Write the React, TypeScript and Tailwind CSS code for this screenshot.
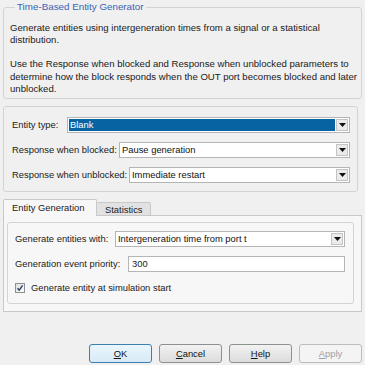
import clsx from "clsx";

const font = { fontFamily: '"Liberation Sans", Arial, sans-serif' };

function Arrow() {
  return (
    <div className="m-[1px] flex w-[12px] items-center justify-center border border-[#c4c4c4] bg-[#ebebeb]">
      <svg width="7" height="4" viewBox="0 0 7 4">
        <path d="M0 0h7L3.5 4z" fill="#111" />
      </svg>
    </div>
  );
}

function Combo({ value, selected, className }: { value: string; selected?: boolean; className?: string }) {
  return (
    <div className={clsx("flex h-[16px] border border-[#b5b5b5] bg-white", className)}>
      <div
        className={clsx(
          "my-[1px] ml-[1px] flex-1 pl-[1px] leading-[12px] whitespace-nowrap",
          selected ? "bg-[#0863a3] text-white" : "text-[#111]"
        )}
      >
        {value}
      </div>
      <Arrow />
    </div>
  );
}

function Button({ label, mn, focused, disabled }: { label: string; mn: string; focused?: boolean; disabled?: boolean }) {
  return (
    <button
      className={clsx(
        "h-[19px] w-[63px] rounded-[3px] border text-center leading-[17px]",
        focused
          ? "border-[#3c7fb1] bg-gradient-to-b from-[#eaf6fd] to-[#d7eaf7] text-[#111]"
          : disabled
          ? "border-[#bcbcbc] bg-[#f4f4f4] text-[#a0a0a0]"
          : "border-[#8e8f8f] bg-gradient-to-b from-[#f2f2f2] to-[#dcdcdc] text-[#111]"
      )}
    >
      <span className="underline">{mn}</span>
      {label}
    </button>
  );
}

export default function App() {
  return (
    <div
      className="flex h-[365px] w-[365px] flex-col overflow-hidden bg-[#f0f0f0] px-[3px] pt-[1px] text-[9.4px] text-[#1a1a1a]"
      style={font}
    >
      {/* description group */}
      <fieldset className="mr-[1px] rounded-[3px] border border-[#d3d3d3] pr-[4px] pb-[3px] pl-[6px]">
        <legend className="ml-[5px] px-[2px] text-[9.8px] leading-[12px] text-[#3a63b0]">Time-Based Entity Generator</legend>
        <div className="pt-[9px] text-[9.6px] leading-[12.2px] whitespace-nowrap">
          <p>
            Generate entities using intergeneration times from a signal or a statistical
            <br />
            distribution.
          </p>
          <p className="mt-[12px]">
            Use the Response when blocked and Response when unblocked parameters to
            <br />
            determine how the block responds when the OUT port becomes blocked and later
            <br />
            unblocked.
          </p>
        </div>
      </fieldset>

      {/* parameters */}
      <div className="mt-[7px] mr-[4px] flex flex-col gap-[9px] rounded-[3px] border border-[#d3d3d3] pt-[10px] pr-[7px] pb-[8px] pl-[8px]">
        <div className="flex items-center">
          <span className="w-[55px]">Entity type:</span>
          <Combo value="Blank" selected className="flex-1" />
        </div>
        <div className="flex items-center">
          <span className="w-[107px]">Response when blocked:</span>
          <Combo value="Pause generation" className="flex-1" />
        </div>
        <div className="flex items-center">
          <span className="w-[117px]">Response when unblocked:</span>
          <Combo value="Immediate restart" className="flex-1" />
        </div>
      </div>

      {/* tabs */}
      <div className="mt-[7px] flex items-end">
        <div className="relative z-10 -mb-[1px] h-[17px] w-[94px] rounded-t-[2px] border border-b-0 border-[#c8c8c8] bg-[#f7f7f7] pl-[8px] leading-[16px]">
          Entity Generation
        </div>
        <div className="h-[13px] w-[54px] rounded-t-[2px] border border-b-0 border-l-0 border-[#c8c8c8] bg-[#e2e2e2] pl-[8px] leading-[13px]">
          Statistics
        </div>
      </div>
      <div className="h-[97px] border border-[#c8c8c8] bg-[#f7f7f7] pt-[6px] pr-[7px] pl-[3px]">
        <div className="flex flex-col rounded-[3px] border border-[#d3d3d3] pt-[8px] pr-[8px] pb-[8px] pl-[7px]">
          <div className="flex items-center">
            <span className="w-[100px]">Generate entities with:</span>
            <Combo value="Intergeneration time from port t" className="flex-1" />
          </div>
          <div className="mt-[9px] flex items-center">
            <span className="w-[113px]">Generation event priority:</span>
            <div className="h-[16px] flex-1 border border-[#b5b5b5] bg-white pl-[3px] leading-[14px]">300</div>
          </div>
          <div className="mt-[9px] flex items-center gap-[6px]">
            <svg width="10" height="10" viewBox="0 0 10 10">
              <defs>
                <linearGradient id="cb" x1="0" y1="0" x2="1" y2="1">
                  <stop offset="0" stopColor="#dcdcdc" />
                  <stop offset="1" stopColor="#ffffff" />
                </linearGradient>
              </defs>
              <rect x="0.5" y="0.5" width="9" height="9" fill="url(#cb)" stroke="#8e8f8f" />
              <path d="M2.5 5.2 L4.2 7.2 L7.6 2.4" fill="none" stroke="#2a3f6b" strokeWidth="1.4" />
            </svg>
            <span>Generate entity at simulation start</span>
          </div>
        </div>
      </div>

      {/* buttons */}
      <div className="mt-auto mb-[2px] flex justify-end gap-[7px]">
        <Button mn="O" label="K" focused />
        <Button mn="C" label="ancel" />
        <Button mn="H" label="elp" />
        <Button mn="A" label="pply" disabled />
      </div>
    </div>
  );
}
